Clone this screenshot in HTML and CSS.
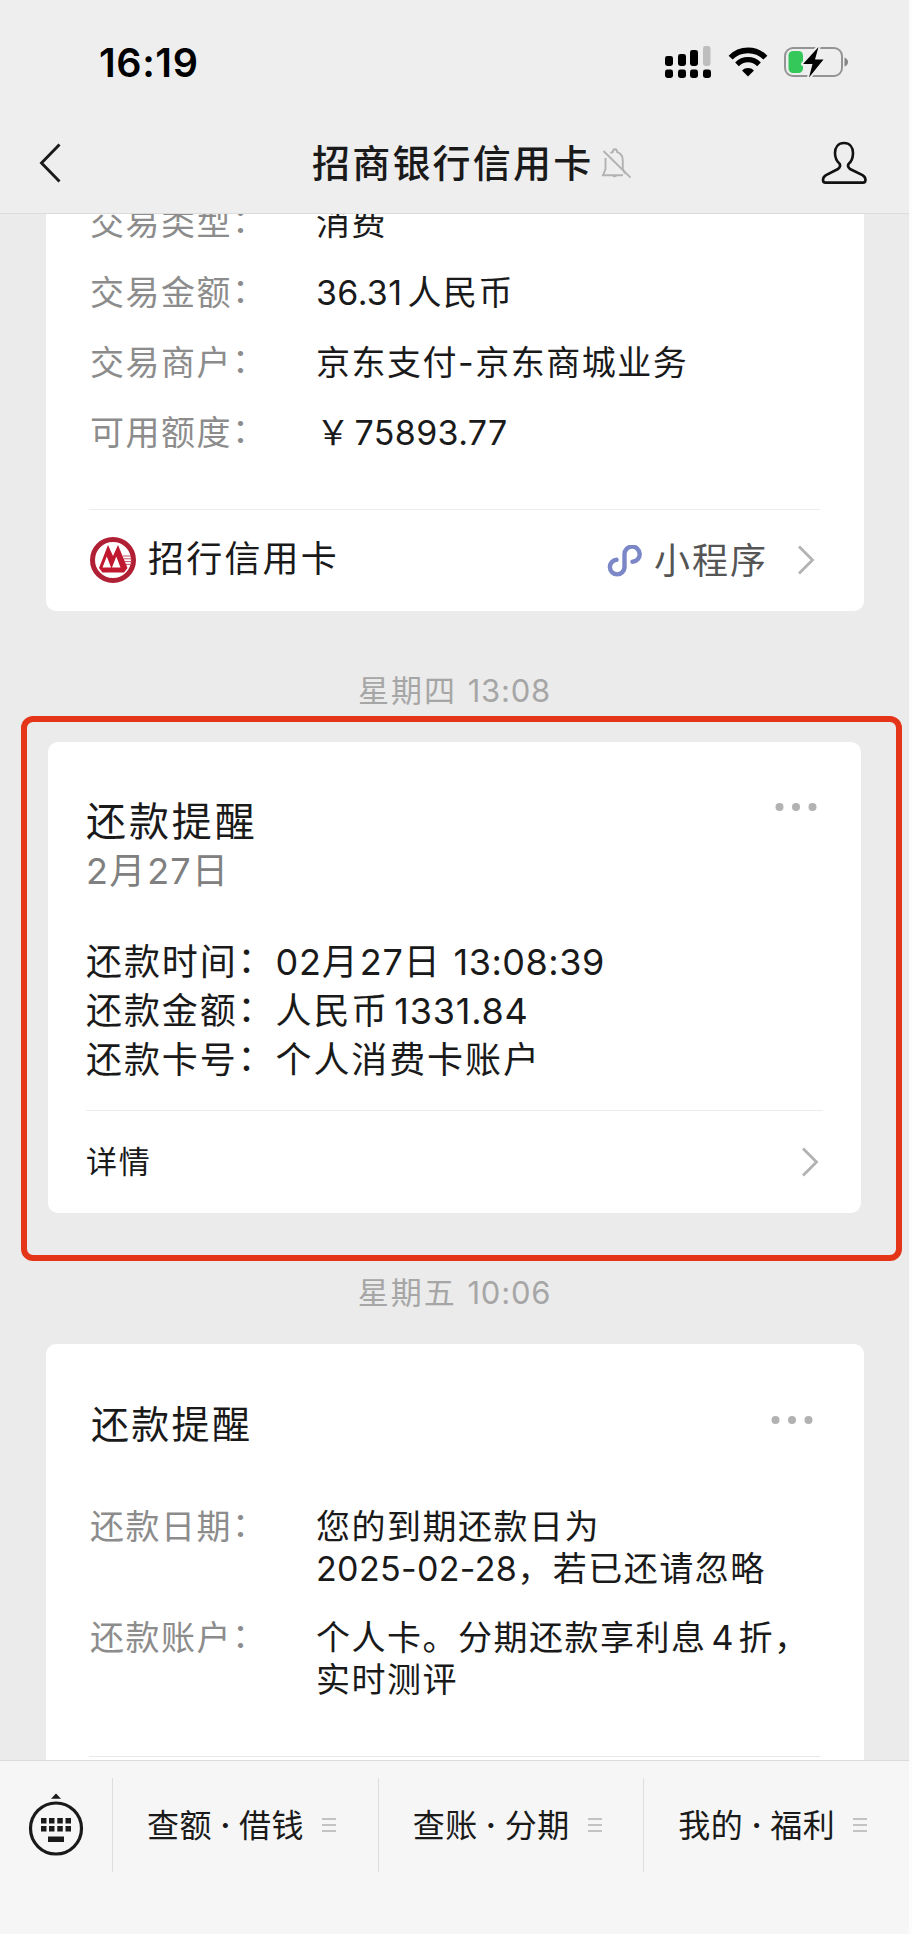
FILE: index.html
```html
<!DOCTYPE html>
<html lang="zh-CN">
<head>
<meta charset="utf-8">
<title>招商银行信用卡</title>
<link rel="stylesheet" href="styles.css">
</head>
<body>
<div class="screen">
  <header class="header">
    <div class="status">
      <span class="clock">16:19</span>
      <div class="status-icons">
        <svg class="signal" viewBox="0 0 46 32" width="46" height="32">
          <g fill="#000">
            <rect x="0" y="10" width="8" height="10" rx="2.4"/><rect x="13" y="8" width="8" height="12" rx="2.4"/><rect x="25" y="4" width="8" height="16" rx="2.4"/>
            <rect x="0" y="23.5" width="8" height="8.500" rx="2.4"/><rect x="13" y="23.500" width="8" height="8.500" rx="2.4"/><rect x="25" y="23.500" width="8" height="8.500" rx="2.4"/><rect x="38" y="23.500" width="8" height="8.500" rx="2.4"/>
          </g>
          <rect x="38" y="0" width="7.500" height="20" rx="2.4" fill="#bdbdbd"/>
        </svg>
        <svg class="wifi" viewBox="0 0 40 30" width="40" height="30">
          <path d="M2.600 10.600a24.500 24.500 0 0 1 34.800 0" fill="none" stroke="#000" stroke-width="5.600"/>
          <path d="M9 17.300a15.500 15.500 0 0 1 22 0" fill="none" stroke="#000" stroke-width="5.200"/>
          <path d="M14 23.400a8.600 8.600 0 0 1 12 0L20 29.500z"/>
        </svg>
        <svg class="battery" viewBox="0 0 64 32" width="64" height="32">
          <rect x="1" y="2" width="57" height="28" rx="8" fill="none" stroke="#949494" stroke-width="2"/>
          <path d="M60.500 11.500q3.500 1.500 3.500 4.500t-3.500 4.500z" fill="#858585"/>
          <rect x="4.500" y="5" width="14.500" height="22" rx="4.500" fill="#34c759"/>
          <path d="M34.500 1L19 18h9.500L25 31.500 39.500 13.500H31z" fill="#000" stroke="#eee" stroke-width="4" paint-order="stroke" stroke-linejoin="round"/>
        </svg>
      </div>
    </div>
    <div class="nav">
      <svg class="back" viewBox="0 0 24 42" width="24" height="42"><path d="M22.500 2.500L4.500 21 22.500 39.500" fill="none" stroke="#1a1a1a" stroke-width="2.900"/></svg>
      <div class="title-wrap">
        <h1 class="title">招商银行信用卡</h1>
        <svg class="bell" viewBox="0 0 30 32" width="30" height="32" fill="none" stroke="#b2b2b2" stroke-width="1.900">
          <path d="M9.500 6.200Q11 5 12 4.800Q12 2.300 14 2.300T16 4.800Q21.800 7 21.800 13.500V22L24 26.500"/>
          <path d="M4.500 11V22L2 28.300H22"/><path d="M11.800 29.200h3.600"/><path d="M2.500 4L29.500 30.500"/>
        </svg>
      </div>
      <svg class="person" viewBox="0 0 46 44" width="46" height="44"><path d="M23 2C17.500 2 14 6 14 12C14 17 16 20.500 18.800 23Q20 25.500 17 28L5 34.200Q2 36 2 39Q2 41.600 4.500 41.600H42Q44.500 41.600 44.500 39Q44.500 36 41.500 34.200L29 28Q26 25.500 27.500 23C30.500 20.500 32 17 32 12C32 6 28.500 2 23 2Z" fill="none" stroke="#111" stroke-width="2.600" stroke-linejoin="round"/></svg>
    </div>
  </header>

  <main class="chat">
    <section class="card card-trade">
      <dl class="fields">
        <div class="row"><dt>交易类型<i>：</i></dt><dd>消费</dd></div>
        <div class="row"><dt>交易金额<i>：</i></dt><dd><span class="num gap-r">36.31</span>人民币</dd></div>
        <div class="row"><dt>交易商户<i>：</i></dt><dd>京东支付-京东商城业务</dd></div>
        <div class="row"><dt>可用额度<i>：</i></dt><dd><span class="yen">￥</span><span class="num">75893.77</span></dd></div>
      </dl>
      <div class="foot foot-mini">
        <svg class="logo" viewBox="0 0 46 46" width="46" height="46">
          <circle cx="23" cy="23" r="20.500" fill="#fff" stroke="#b01f33" stroke-width="5"/>
          <path d="M33 19h8M34 21.800h8M35 24.600h7M36 27.400h6" stroke="#c4505f" stroke-width="1"/>
          <path d="M9 31L18 8L23 19L28 8L37.500 31L34 35.500H12.500Z" fill="#c0182f"/>
          <path d="M12.500 30.500L16.800 19.500L21 30.500ZM22 30.500L26.300 19.500L30.500 30.500Z" fill="#fff"/>
        </svg>
        <span class="brand">招行信用卡</span>
        <svg class="mini" viewBox="0 0 36 32" width="36" height="32"><path d="M10.500 14.800A7.300 7.300 0 1 0 18.500 22.500V9.500A7.600 7.600 0 1 1 26.500 16.800" fill="none" stroke="#7b87c7" stroke-width="4.400" stroke-linecap="round"/></svg>
        <span class="mini-label">小程序</span>
        <svg class="chev" viewBox="0 0 18 30" width="18" height="30"><path d="M2 1.500L15.500 15 2 28.500" fill="none" stroke="#b2b2b2" stroke-width="2.800"/></svg>
      </div>
    </section>

    <p class="time time-thu">星期四 <span>13:08</span></p>

    <div class="marked">
      <section class="card card-paid">
        <div class="head">
          <h2>还款提醒</h2>
          <svg class="dots" viewBox="0 0 42 8" width="42" height="8" fill="#b2b2b2"><circle cx="4.500" cy="4" r="4"/><circle cx="21" cy="4" r="4"/><circle cx="37.500" cy="4" r="4"/></svg>
        </div>
        <p class="date"><span class="num">2</span>月<span class="num">27</span>日</p>
        <div class="lines">
          <p>还款时间<i>：</i><span class="num">02</span>月<span class="num">27</span>日 <span class="num clocktime">13:08:39</span></p>
          <p>还款金额<i>：</i>人民币<span class="num gap-l">1331.84</span></p>
          <p>还款卡号<i>：</i>个人消费卡账户</p>
        </div>
        <div class="foot foot-detail">
          <span class="detail">详情</span>
          <svg class="chev" viewBox="0 0 18 30" width="18" height="30"><path d="M2 1.500L15.500 15 2 28.500" fill="none" stroke="#b2b2b2" stroke-width="2.800"/></svg>
        </div>
      </section>
    </div>

    <p class="time time-fri">星期五 <span>10:06</span></p>

    <section class="card card-due">
      <div class="head">
        <h2>还款提醒</h2>
        <svg class="dots" viewBox="0 0 42 8" width="42" height="8" fill="#b2b2b2"><circle cx="4.500" cy="4" r="4"/><circle cx="21" cy="4" r="4"/><circle cx="37.500" cy="4" r="4"/></svg>
      </div>
      <dl class="fields">
        <div class="row"><dt>还款日期<i>：</i></dt><dd>您的到期还款日为<br><span class="num">2025-02-28</span>，若已还请忽略</dd></div>
        <div class="row"><dt>还款账户<i>：</i></dt><dd>个人卡。分期还款享利息<span class="four">4</span>折，<br>实时测评</dd></div>
      </dl>
      <div class="rule"></div>
    </section>
  </main>

  <footer class="bar">
    <div class="kbd">
      <svg viewBox="0 0 56 64" width="56" height="64">
        <path d="M28 .5L33 5.800H23z" fill="#1a1a1a"/>
        <circle cx="28" cy="35.500" r="25.500" fill="none" stroke="#1a1a1a" stroke-width="3.200"/>
        <path d="M13 25h5.500v5.500H13zM21 25h5.500v5.500H21zM29.300 25h5.500v5.500h-5.500zM37.500 25H43v5.500h-5.500zM13 33h5.500v5.500H13zM21 33h5.500v5.500H21zM29.300 33h5.500v5.500h-5.500zM37.500 33H43v5.500h-5.500zM20 43.500h16v5.500H20z" fill="#1a1a1a"/>
      </svg>
    </div>
    <div class="tab"><span>查额<b>·</b>借钱</span><svg viewBox="0 0 14 16" width="14" height="16"><path d="M0 2h14M0 8h14M0 14h14" stroke="#b2b2b2" stroke-width="1.500"/></svg></div>
    <div class="tab"><span>查账<b>·</b>分期</span><svg viewBox="0 0 14 16" width="14" height="16"><path d="M0 2h14M0 8h14M0 14h14" stroke="#b2b2b2" stroke-width="1.500"/></svg></div>
    <div class="tab"><span>我的<b>·</b>福利</span><svg viewBox="0 0 14 16" width="14" height="16"><path d="M0 2h14M0 8h14M0 14h14" stroke="#b2b2b2" stroke-width="1.500"/></svg></div>
  </footer>
</div>
</body>
</html>
```
FILE: styles.css
```css
* { box-sizing: border-box; }
body { margin: 0; background: #fcfcfc; }
h1, h2, p, dl, dd { margin: 0; font-weight: 400; }
svg { display: block; flex: none; }
i { font-style: normal; display: inline-block; transform: translate(0, -2px); }

.screen {
  width: 909px;
  height: 1934px;
  display: flex;
  flex-direction: column;
  overflow: hidden;
  background: #ebebeb;
  color: #1a1a1a;
  font-family: Inter, "Noto Sans CJK SC", sans-serif;
  white-space: nowrap;
}

/* header */
.header { height: 214px; flex: none; background: #eee; border-bottom: 1px solid #dcdcdc; }
.status { height: 126px; display: flex; justify-content: space-between; padding: 0 61px 0 99px; }
.clock { font-size: 39.5px; font-weight: 600; line-height: 126px; color: #000; letter-spacing: .6px; }
.status-icons { display: flex; padding-top: 46px; }
.wifi { margin: 1px 0 0 17px; }
.battery { margin-left: 16px; }
.nav { height: 74px; display: flex; align-items: center; padding: 0 42px 0 37px; }
.title-wrap { flex: 1; display: flex; align-items: center; padding-left: 251px; }
.title { font-size: 38px; font-weight: 500; letter-spacing: 2.2px; line-height: 74px; }
.bell { margin-left: 8px; }

/* messages */
.chat { flex: 1; min-height: 0; overflow: hidden; }
.card { background: #fff; border-radius: 10px; }
.card-trade { width: 818px; margin: -27px 0 0 46px; padding-top: 1px; height: 424px; }
.fields { font-size: 34px; letter-spacing: 1.5px; }
.row { display: flex; line-height: 70px; padding-left: 44px; }
.row dt { width: 226px; color: #8c8c8c; }
.num { letter-spacing: .35px; }
.gap-r { margin-right: 5px; }
.gap-l { margin-left: 5px; }
.yen { margin-right: 3px; }
.foot { display: flex; align-items: center; border-top: 1px solid #ececec; }
.foot-mini { margin: 41px 44px 0 43px; height: 102px; }
.brand { font-size: 36px; line-height: 40px; letter-spacing: 2.2px; margin: -4px 0 0 12px; }
.mini { margin-left: auto; }
.logo { margin: -1px 0 0 1px; }
.mini-label { font-size: 36px; line-height: 40px; letter-spacing: 2px; margin-left: 12px; color: #555; }
.foot-mini .chev { margin: -1px 5px 0 29px; }

.time { text-align: center; font-size: 31px; line-height: 40px; letter-spacing: 2px; color: #a6a6a6; }
.time span { letter-spacing: .8px; }
.time-thu { margin-top: 60px; }
.marked {
  margin: 5px 0 0 21px;
  width: 881px;
  height: 545px;
  border: 6px solid #e43519;
  border-radius: 12px;
  padding: 20px 0 0 21px;
}
.card-paid { width: 813px; height: 471px; padding: 52px 38px 0 38px; }
.head { display: flex; justify-content: space-between; }
.card-paid h2 { font-size: 40px; letter-spacing: 2.900px; line-height: 56px; }
.card-paid .dots { margin: 9px 6px 0 0; }
.date { font-size: 36px; line-height: 42px; letter-spacing: 2px; color: #808080; }
.date .num { letter-spacing: 1.200px; }
.lines { margin-top: 46px; font-size: 36px; line-height: 49px; letter-spacing: 1.9px; }
.lines .num { letter-spacing: .8px; }
.lines .clocktime { letter-spacing: .5px; }
.foot-detail { margin-top: 25px; height: 103px; }
.detail { font-size: 31px; line-height: 40px; letter-spacing: 1.7px; }
.foot-detail .chev { margin: 0 4px 0 auto; }

.time-fri { margin-top: 12px; }
.card-due { width: 818px; height: 440px; margin: 31px 0 0 46px; }
.card-due .head { padding: 52px 51px 0 45px; }
.card-due h2 { font-size: 38px; letter-spacing: 2.3px; line-height: 56px; }
.card-due .dots { margin-top: 20px; }
.card-due .fields { margin-top: 54px; }
.card-due .row { line-height: 42px; margin-bottom: 27px; }
.four { margin: 0 5px 0 5px; letter-spacing: 0; }
.rule { margin: 55px 44px 0 43px; height: 1px; background: #e8e8e8; }

/* menu bar */
.bar { height: 174px; flex: none; display: flex; background: #f6f6f6; border-top: 1px solid #dadada; padding-top: 17px; }
.kbd { width: 112px; padding: 15px 0 0 28px; }
.tab { flex: 1; height: 94px; display: flex; align-items: center; border-left: 1px solid #dedede; padding-left: 34px; font-size: 32px; line-height: 40px; letter-spacing: .5px; }
.tab span { margin-top: 2px; }
.tab b { display: inline-block; width: 27px; text-align: center; font-weight: 600; }
.tab svg { margin-left: 18px; }
```
